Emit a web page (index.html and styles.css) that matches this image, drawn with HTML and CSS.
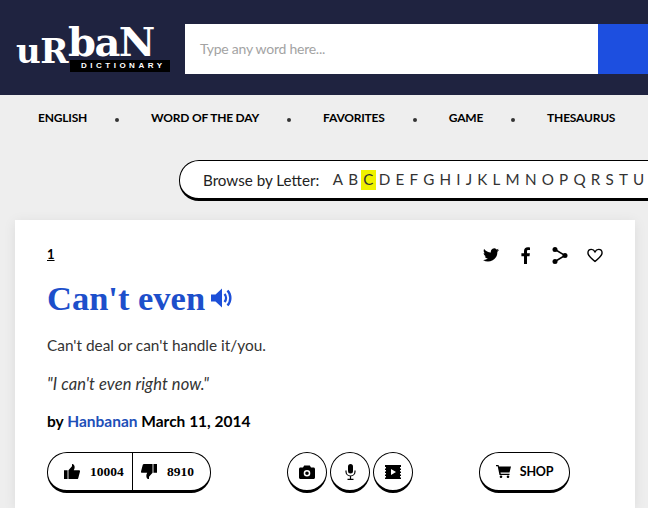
FILE: index.html
```html
<!DOCTYPE html>
<html lang="en">
<head>
<meta charset="utf-8">
<title>Urban Dictionary: Can't even</title>
<link rel="stylesheet" href="styles.css">
</head>
<body>
<header class="header">
  <a class="logo">
    <span class="logo-word"><span class="logo-small">uR</span><span class="logo-big">baN</span></span>
    <span class="logo-tag">DICTIONARY</span>
  </a>
  <div class="search">
    <div class="search-input">Type any word here...</div>
    <div class="search-button"></div>
  </div>
</header>
<nav class="nav">
  <a>ENGLISH</a><i class="dot"></i>
  <a>WORD OF THE DAY</a><i class="dot"></i>
  <a>FAVORITES</a><i class="dot"></i>
  <a>GAME</a><i class="dot"></i>
  <a>THESAURUS</a>
</nav>
<div class="browse-row">
  <div class="browse">
    <span class="browse-label">Browse by Letter:</span>
    <span class="letters"><a>A</a><a>B</a><a class="on">C</a><a>D</a><a>E</a><a>F</a><a>G</a><a>H</a><a>I</a><a>J</a><a>K</a><a>L</a><a>M</a><a>N</a><a>O</a><a>P</a><a>Q</a><a>R</a><a>S</a><a>T</a><a>U</a></span>
  </div>
</div>
<main class="card">
  <div class="card-top">
    <span class="rank">1</span>
    <div class="share">
      <svg width="16" height="14" viewBox="0 0 24 20"><path d="M24 2.400c-.9.400-1.800.7-2.800.8 1-.6 1.800-1.600 2.200-2.700-.9.600-2 1-3.100 1.200A4.900 4.900 0 0 0 11.900 6.200C7.800 6 4.200 4 1.700.9.400 3.200 1 6.100 3.200 7.500c-.8 0-1.600-.2-2.200-.6 0 2.300 1.600 4.500 3.900 5-.7.200-1.500.2-2.200.1.600 2 2.400 3.400 4.600 3.400A9.900 9.900 0 0 1 0 17.500 14 14 0 0 0 21.500 5.100c1-.7 1.900-1.600 2.500-2.700z"/></svg>
      <svg width="9" height="17" viewBox="0 0 9 17"><path d="M6 17V9.300h2.500l.4-3H6V4.500c0-.9.300-1.400 1.500-1.400H9V.4C8.700.3 7.800.2 6.800.2 4.500.2 3 1.600 3 4.100v2.200H.4v3H3V17z"/></svg>
      <svg width="16" height="17" viewBox="0 0 16 17"><circle cx="3" cy="2.500" r="2.500"/><circle cx="3" cy="14.500" r="2.500"/><circle cx="13" cy="8.500" r="2.500"/><path d="M3 2.500l10 6-10 6" fill="none" stroke="#000" stroke-width="1.500"/></svg>
      <svg class="heart" width="16" height="15" viewBox="0 0 17 15"><path d="M8.500 13.800C4 10.200 1 7.800 1 4.800 1 2.600 2.600 1 4.600 1c1.600 0 3 .9 3.900 2.600C9.400 1.900 10.800 1 12.400 1 14.400 1 16 2.600 16 4.800c0 3-3 5.400-7.500 9z" fill="none" stroke="#000" stroke-width="1.500"/></svg>
    </div>
  </div>
  <h1 class="word">Can't even<svg class="speaker" width="21" height="20" viewBox="0 0 21 20"><path d="M0 6.500v7h4.500l6.500 6V.5l-6.500 6z"/><path d="M13.500 6c2 2.300 2 5.700 0 8" fill="none" stroke="#1d4fd8" stroke-width="2.400"/><path d="M16.500 2.500c3.800 4.200 3.800 10.800 0 15" fill="none" stroke="#1d4fd8" stroke-width="2.400"/></svg></h1>
  <p class="meaning">Can't deal or can't handle it/you.</p>
  <p class="example">"I can't even right now."</p>
  <p class="contributor">by <a>Hanbanan</a> March 11, 2014</p>
  <div class="actions">
    <div class="votes">
      <span class="vote up">
        <svg width="16" height="17" viewBox="0 0 18 17"><path d="M0 7h4v10H0zM5 7l4-4.500V0c2 0 3 1.500 3 3.500S11 7 11 7h6c.8 0 1 .8 1 1.500L16 16c-.2.700-.7 1-1.500 1H5z"/></svg>
        <b>10004</b>
      </span>
      <span class="vote down">
        <svg width="16" height="17" viewBox="0 0 18 17"><path d="M14 0h4v10h-4zM13 10l-4 4.500V17c-2 0-3-1.500-3-3.500S7 10 7 10H1c-.8 0-1-.8-1-1.500L2 1c.2-.7.700-1 1.500-1H13z"/></svg>
        <b>8910</b>
      </span>
    </div>
    <div class="media">
      <span class="circle"><svg width="16" height="14" viewBox="0 0 16 14"><path fill-rule="evenodd" d="M1.500 2.500H4L5.200.5h5.600L12 2.500h2.500c.8 0 1.500.7 1.500 1.500v8.500c0 .8-.7 1.500-1.500 1.500h-13C.7 14 0 13.300 0 12.500V4c0-.8.700-1.500 1.500-1.500zM8 5a3.300 3.300 0 1 0 0 6.600A3.300 3.300 0 0 0 8 5zm0 1.500a1.800 1.800 0 1 1 0 3.600 1.800 1.800 0 0 1 0-3.600z"/></svg></span>
      <span class="circle"><svg width="11" height="16" viewBox="0 0 11 16"><rect x="3" y="0" width="5" height="9.500" rx="2.500"/><path d="M1 6.500v1a4.500 4.500 0 0 0 9 0v-1M5.500 12v3M2.500 15.300h6" fill="none" stroke="#000" stroke-width="1.200"/></svg></span>
      <span class="circle"><svg width="16" height="14" viewBox="0 0 16 14"><path fill-rule="evenodd" d="M0 0h16v2h-1v1.500h1v1.500h-1v1.500h1V8h-1v1.500h1V11h-1v1.500h1V14H0v-1.500h1V11H0V9.500h1V8H0V6.500h1V5H0V3.500h1V2H0zM6 4v6l5-3z"/></svg></span>
    </div>
    <div class="shop">
      <svg width="15" height="13" viewBox="0 0 15 13"><path d="M0 0h2.500l.5 1.500h12L13.500 7.500H4.500l.3 1.200H13.500v1.300H3.500L1.700 1.300H0z"/><circle cx="5" cy="11.700" r="1.300"/><circle cx="12" cy="11.700" r="1.300"/></svg>
      <span>SHOP</span>
    </div>
  </div>
</main>
</body>
</html>
```
FILE: styles.css
```css
* { box-sizing: border-box; }
html, body { margin: 0; height: 508px; overflow: hidden; }
body { background: #eeeeee; font-family: "Lato", "Noto Sans", sans-serif; color: #000; width: 648px; }

.header { height: 95px; background: #1f2340; display: flex; padding: 24px 0 0 16px; }
.logo { width: 169px; height: 50px; position: relative; flex: none; display: block; }
.logo-word { position: absolute; left: 0; top: 0; color: #fff; font-family: "DejaVu Serif", serif; font-weight: 700; line-height: 50px; white-space: nowrap; }
.logo-small { font-size: 34px; letter-spacing: -.5px; }
.logo-big { font-size: 40px; letter-spacing: -1.500px; position: relative; top: -7px; }
.logo-tag { position: absolute; left: 54px; top: 36px; width: 100px; height: 12px; background: #000; color: #fff; font: 700 8px/12px "Liberation Sans", sans-serif; letter-spacing: 3.500px; padding-left: 11px; white-space: nowrap; overflow: hidden; }
.search { display: flex; flex: 1; height: 50px; }
.search-input { flex: 1; background: #fff; color: #a3a3a3; font-size: 14px; letter-spacing: -.25px; line-height: 50px; padding-left: 15px; }
.search-button { width: 50px; background: #1d4fe0; }

.nav { height: 45px; display: flex; align-items: center; padding-left: 38px; white-space: nowrap; font: 700 12px "Lato", sans-serif; letter-spacing: -.2px; overflow: hidden; }
.nav a { flex: none; }
.dot { flex: none; width: 4px; height: 4px; border-radius: 50%; background: #333; margin: 4px 32px 0 28px; }

.browse-row { padding: 20px 0 0 179px; overflow: hidden; height: 80px; width: 648px; }
.browse { width: 560px; height: 41px; background: #fff; border: 1px solid #000; border-bottom-width: 3px; border-radius: 20px 0 0 20px; display: flex; align-items: center; padding-left: 23px; font-size: 15.200px; white-space: nowrap; color: #222; }
.browse-label { margin-right: 11px; }
.letters { display: flex; }
.letters a { padding: 1.500px 2.600px; line-height: 17px; color: #333; }
.letters a.on { background: #eff200; }

.card { margin-left: 15px; width: 620px; height: 288px; overflow: hidden; background: #fff; padding: 25px 32px 0; box-shadow: 0 2px 12px rgba(0,0,0,.08); }
.card-top { display: flex; justify-content: space-between; align-items: center; height: 20px; }
.rank { font-size: 13px; font-weight: 700; text-decoration: underline; margin-top: -2px; }
.share { display: flex; align-items: center; gap: 22px; }
.heart { margin-left: -3px; }
.word { margin: 11px 0 0; height: 44px; font: 700 34.500px/44px "Liberation Serif", serif; color: #1d4fcb; display: flex; align-items: center; gap: 6px; }
.speaker { fill: #1d4fd8; flex: none; }
.meaning { margin: 13px 0 0; font-size: 15.400px; line-height: 24px; color: #333; }
.example { margin: 15px 0 0; font-size: 16.500px; letter-spacing: .1px; line-height: 24px; color: #333; font-style: italic; }
.contributor { margin: 13px 0 0; font-size: 15.500px; line-height: 24px; font-weight: 700; }
.contributor a { color: #1d4fb8; }

.actions { display: flex; margin-top: 19px; }
.votes { display: flex; width: 164px; height: 41px; border: 1px solid #000; border-bottom-width: 3px; border-radius: 20px; }
.vote { display: flex; align-items: center; font: 700 13.500px "Liberation Serif", serif; gap: 10px; }
.vote.up { width: 85px; padding-left: 16px; border-right: 1px solid #000; }
.vote.down { padding-left: 8px; }
.media { display: flex; gap: 3px; margin-left: 76px; }
.circle { width: 40px; height: 41px; border: 1px solid #000; border-bottom-width: 3px; border-radius: 50%; display: flex; align-items: center; justify-content: center; }
.shop { display: flex; align-items: center; justify-content: center; gap: 9px; margin-left: 66px; width: 91px; height: 41px; border: 1px solid #000; border-bottom-width: 3px; border-radius: 20px; font: 700 12.500px "Lato", sans-serif; letter-spacing: -.2px; }
```
